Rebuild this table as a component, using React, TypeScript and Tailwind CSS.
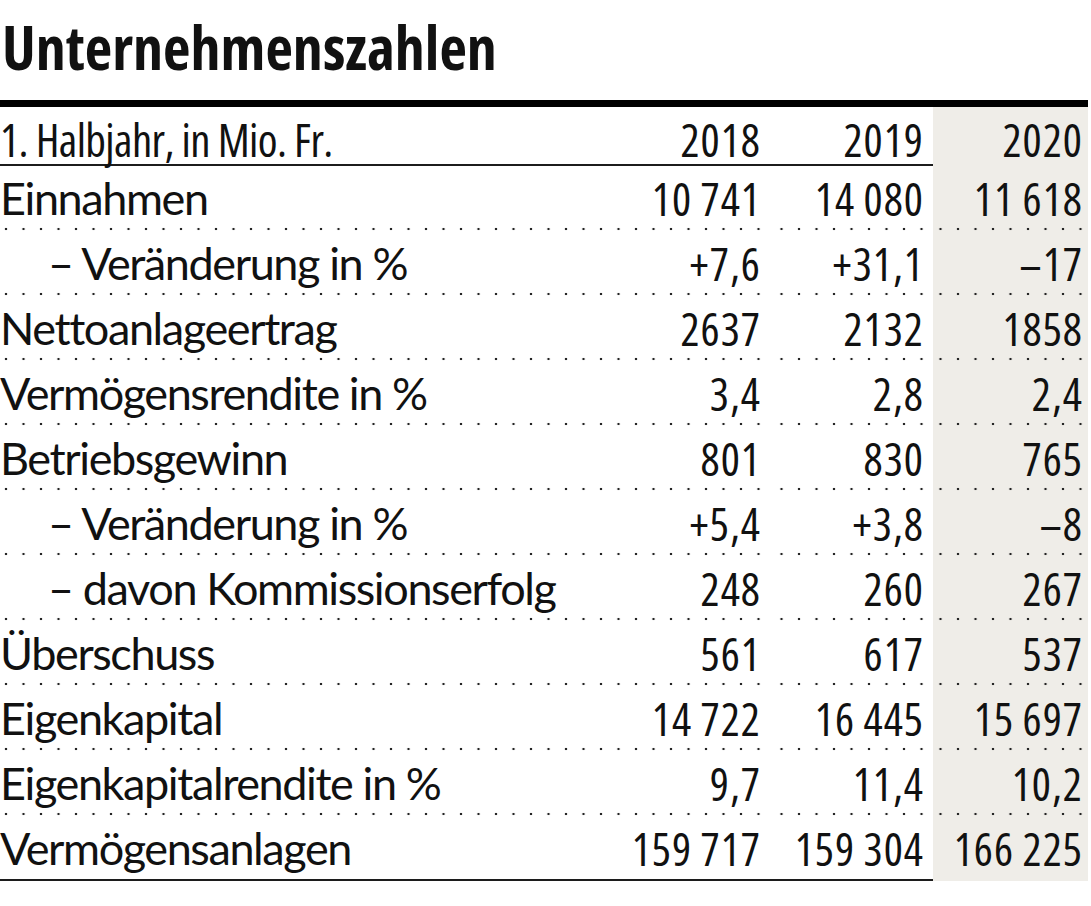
const years = ['2018', '2019', '2020'];

const rows = [
  { label: 'Einnahmen', values: ['10\u2009741', '14\u2009080', '11\u2009618'] },
  { label: '– Veränderung in %', values: ['+7,6', '+31,1', '–17'], indent: true },
  { label: 'Nettoanlageertrag', values: ['2637', '2132', '1858'] },
  { label: 'Vermögensrendite in %', values: ['3,4', '2,8', '2,4'] },
  { label: 'Betriebsgewinn', values: ['801', '830', '765'] },
  { label: '– Veränderung in %', values: ['+5,4', '+3,8', '–8'], indent: true },
  { label: '– davon Kommissionserfolg', values: ['248', '260', '267'], indent: true },
  { label: 'Überschuss', values: ['561', '617', '537'] },
  { label: 'Eigenkapital', values: ['14\u2009722', '16\u2009445', '15\u2009697'] },
  { label: 'Eigenkapitalrendite in %', values: ['9,7', '11,4', '10,2'] },
  { label: 'Vermögensanlagen', values: ['159\u2009717', '159\u2009304', '166\u2009225'] },
];

const dots =
  'bg-[radial-gradient(circle,#222_1px,transparent_1.6px)] bg-[length:17.5px_4px] bg-repeat-x bg-bottom';

const num =
  "font-['Open_Sans',sans-serif] font-stretch-condensed tracking-[1px] text-right whitespace-nowrap";

const App = () => {
  return (
    <div className="w-[1091px] h-[906px] bg-white text-[#111] font-['Lato',sans-serif]">
      <h1 className="h-[100px] pt-[17px] pl-[2px] text-[60px] leading-none font-bold font-['Open_Sans',sans-serif] font-stretch-condensed">
        Unternehmenszahlen
      </h1>
      <div className="w-[1088px] h-[7px] bg-black" />

      <div className="w-[1088px]">
        {/* header row */}
        <div className="grid grid-cols-[1fr_163px_163px_155px] h-[59px] border-b-2 border-[#1c1c1c] text-[45px] leading-[53px]">
          <div className="pt-[6px] whitespace-nowrap font-['Open_Sans',sans-serif] font-stretch-condensed tracking-[-0.6px]">
            1. Halbjahr, in Mio. Fr.
          </div>
          <div className={`pt-[6px] pr-[9px] ${num}`}>{years[0]}</div>
          <div className={`pt-[6px] pr-[9px] ${num}`}>{years[1]}</div>
          <div className={`pt-[6px] pr-[5px] bg-[#efede8] ${num}`}>{years[2]}</div>
        </div>

        {rows.map((row, i) => {
          const last = i === rows.length - 1;
          const line = last ? '' : dots;
          return (
            <div
              key={i}
              className={`grid grid-cols-[1fr_163px_163px_155px] h-[65px] text-[45px] leading-[65px] ${
                last ? 'border-b-2 border-[#1c1c1c]' : ''
              }`}
            >
              <div className={`${line} whitespace-nowrap tracking-[-1.4px] ${row.indent ? 'pl-[48px]' : ''}`}>
                {row.label}
              </div>
              <div className={`${line} pr-[9px] ${num}`}>{row.values[0]}</div>
              <div className={`${line} pr-[9px] ${num}`}>{row.values[1]}</div>
              <div className={`${line} bg-[#efede8] pr-[5px] ${num}`}>{row.values[2]}</div>
            </div>
          );
        })}
      </div>
    </div>
  );
};

export default App;
